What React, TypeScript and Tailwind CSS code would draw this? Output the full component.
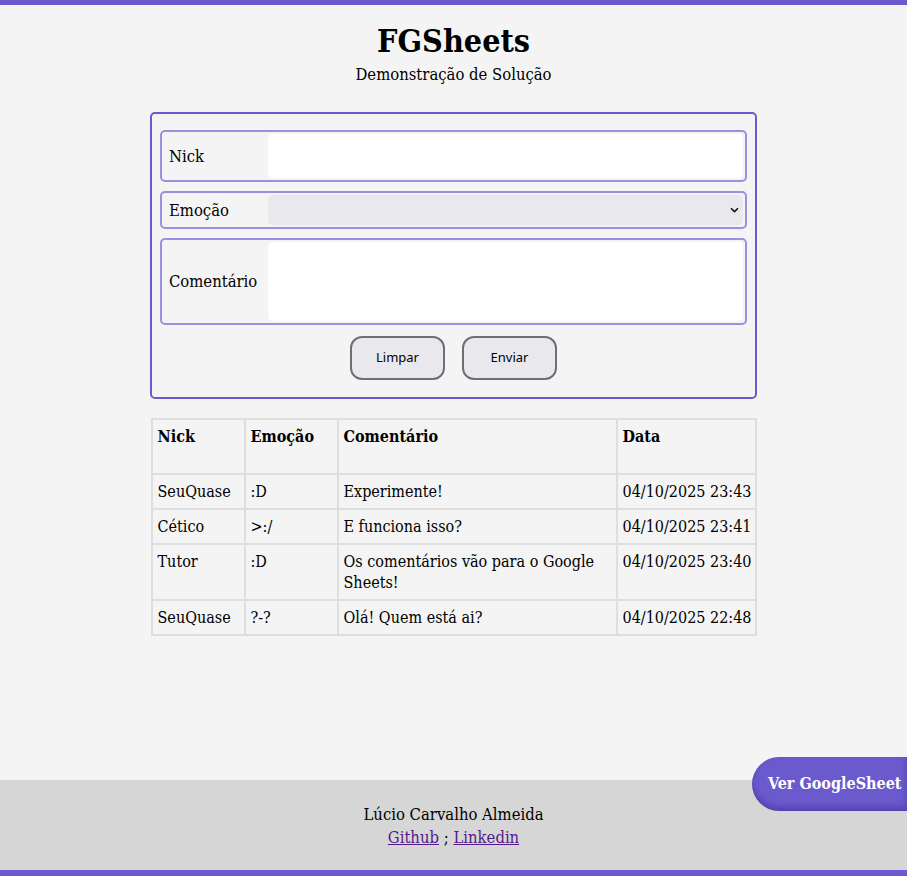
// App.tsx

import React, { useState } from 'react';

interface Entry {
  nick: string;
  emocao: string;
  comentario: string;
  data: string;
}

const entries: Entry[] = [
  { nick: 'SeuQuase', emocao: ':D', comentario: 'Experimente!', data: '04/10/2025 23:43' },
  { nick: 'Cético', emocao: '>:/', comentario: 'E funciona isso?', data: '04/10/2025 23:41' },
  { nick: 'Tutor', emocao: ':D', comentario: 'Os comentários vão para o Google Sheets!', data: '04/10/2025 23:40' },
  { nick: 'SeuQuase', emocao: '?-?', comentario: 'Olá! Quem está ai?', data: '04/10/2025 22:48' },
];

const serif = "font-['DejaVu_Serif_Condensed','DejaVu_Serif',serif]";

const App = () => {
  const [nick, setNick] = useState('');
  const [emocao, setEmocao] = useState('');
  const [comentario, setComentario] = useState('');

  const limpar = () => {
    setNick('');
    setEmocao('');
    setComentario('');
  };

  return (
    <div className={`min-h-screen flex flex-col bg-[#f4f4f4] text-black border-t-[5px] border-b-[6px] border-[#6a5acd] ${serif}`}>
      <main className="flex-1 flex flex-col items-center">
        <h1 className="mt-[14px] text-[32px] leading-[44px] font-bold">FGSheets</h1>
        <p className="pt-[1px] text-[16.5px] leading-[22px]">Demonstração de Solução</p>

        <form
          className="mt-[26px] w-[607px] border-2 border-[#6a5acd] rounded-[5px] px-2 pt-4 pb-[17px] flex flex-col"
          onSubmit={(e) => e.preventDefault()}
        >
          <label className="flex items-center h-[52px] border-2 border-[#9a8fe0] rounded-[5px] p-[2px]">
            <span className="w-[104px] pl-[5px] pt-[2px] text-[16.5px]">Nick</span>
            <input
              type="text"
              value={nick}
              onChange={(e) => setNick(e.target.value)}
              className="flex-1 h-[44px] bg-white rounded-[5px] outline-none px-2"
            />
          </label>

          <label className="mt-[9px] flex items-center h-[38px] border-2 border-[#9a8fe0] rounded-[5px] p-[2px]">
            <span className="w-[104px] pl-[5px] pt-[2px] text-[16.5px]">Emoção</span>
            <div className="flex-1 h-[30px] bg-[#e9e9ed] rounded-[5px] flex items-center justify-end pr-[4px]">
              <select
                value={emocao}
                onChange={(e) => setEmocao(e.target.value)}
                className="flex-1 h-full bg-transparent appearance-none outline-none px-2"
              >
                <option value=""></option>
                <option value=":D">:D</option>
                <option value=">:/">&gt;:/</option>
                <option value="?-?">?-?</option>
              </select>
              <svg width="9" height="6" viewBox="0 0 9 6" fill="none">
                <path d="M1 1.2 L4.5 4.6 L8 1.2" stroke="#111" strokeWidth="1.6" />
              </svg>
            </div>
          </label>

          <label className="mt-[9px] flex items-center h-[87px] border-2 border-[#9a8fe0] rounded-[5px] p-[2px]">
            <span className="w-[104px] pl-[5px] pt-[2px] text-[16.5px]">Comentário</span>
            <textarea
              value={comentario}
              onChange={(e) => setComentario(e.target.value)}
              className="flex-1 h-[79px] bg-white rounded-[5px] outline-none resize-none px-2"
            />
          </label>

          <div className="mt-[11px] flex justify-center gap-[17px] font-['Noto_Sans',sans-serif] text-[13px]">
            <button type="button" onClick={limpar} className="w-[95px] h-[44px] bg-[#e9e9ed] border-2 border-[#6f6f74] rounded-[12px]">
              Limpar
            </button>
            <button type="submit" className="w-[95px] h-[44px] bg-[#e9e9ed] border-2 border-[#6f6f74] rounded-[12px]">
              Enviar
            </button>
          </div>
        </form>

        <table className="mt-[19px] w-[604px] border-collapse table-fixed text-[16px] leading-[21px]">
          <colgroup>
            <col className="w-[93px]" />
            <col className="w-[93px]" />
            <col className="w-[279px]" />
            <col className="w-[139px]" />
          </colgroup>
          <thead>
            <tr className="h-[55px]">
              <th className="border-2 border-[#dedede] px-[5px] pt-[6px] align-top text-left font-bold">Nick</th>
              <th className="border-2 border-[#dedede] px-[5px] pt-[6px] align-top text-left font-bold">Emoção</th>
              <th className="border-2 border-[#dedede] px-[5px] pt-[6px] align-top text-left font-bold">Comentário</th>
              <th className="border-2 border-[#dedede] px-[5px] pt-[6px] align-top text-left font-bold">Data</th>
            </tr>
          </thead>
          <tbody>
            {entries.map((entry, i) => (
              <tr key={i}>
                <td className="border-2 border-[#dedede] px-[5px] py-[6px] align-top">{entry.nick}</td>
                <td className="border-2 border-[#dedede] px-[5px] py-[6px] align-top">{entry.emocao}</td>
                <td className="border-2 border-[#dedede] px-[5px] py-[6px] align-top">{entry.comentario}</td>
                <td className="border-2 border-[#dedede] px-[5px] py-[6px] align-top whitespace-nowrap">{entry.data}</td>
              </tr>
            ))}
          </tbody>
        </table>
      </main>

      <footer className="bg-[#d6d6d6] pt-[24px] pb-[21px] text-center text-[16.5px] leading-[22px]">
        <div>Lúcio Carvalho Almeida</div>
        <div className="mt-[1px]">
          <a href="#" className="text-[#551a8b] underline">Github</a> ; <a href="#" className="text-[#551a8b] underline">Linkedin</a>
        </div>
      </footer>

      <button
        type="button"
        className="fixed right-0 bottom-[65px] w-[155px] h-[54px] pl-4 text-left whitespace-nowrap overflow-hidden rounded-l-[27px] bg-[#6a5acd] text-white font-bold text-[16px] shadow-[inset_0_-4px_6px_rgba(40,20,120,0.35)]"
      >
        Ver GoogleSheet
      </button>
    </div>
  );
};

export default App;
